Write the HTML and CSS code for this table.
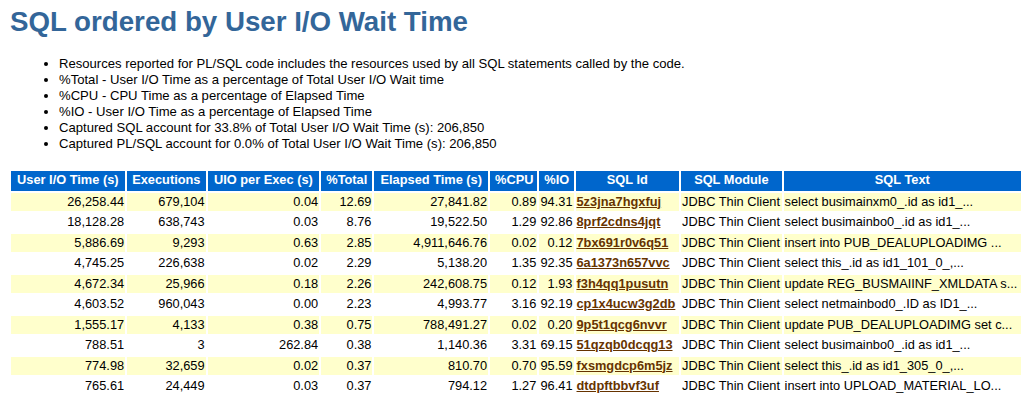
FILE: index.html
```html
<!DOCTYPE html>
<html>
<head>
<meta charset="utf-8">
<title>SQL ordered by User I/O Wait Time</title>
<link rel="stylesheet" href="styles.css">
</head>
<body class="awr">
<div class="page">
<h3 class="awr">SQL ordered by User I/O Wait Time</h3>
<ul class="notes">
<li>Resources reported for PL/SQL code includes the resources used by all SQL statements called by the code.</li>
<li>%Total - User I/O Time as a percentage of Total User I/O Wait time</li>
<li>%CPU - CPU Time as a percentage of Elapsed Time</li>
<li>%IO - User I/O Time as a percentage of Elapsed Time</li>
<li>Captured SQL account for 33.8% of Total User I/O Wait Time (s): 206,850</li>
<li>Captured PL/SQL account for 0.0% of Total User I/O Wait Time (s): 206,850</li>
</ul>
<table class="tdiff">
<thead>
<tr>
<th class="c1">User I/O Time (s)</th>
<th class="c2">Executions</th>
<th class="c3">UIO per Exec (s)</th>
<th class="c4">%Total</th>
<th class="c5">Elapsed Time (s)</th>
<th class="c6">%CPU</th>
<th class="c7">%IO</th>
<th class="c8">SQL Id</th>
<th class="c9">SQL Module</th>
<th class="c10">SQL Text</th>
</tr>
</thead>
<tbody>
<tr class="hl"><td class="num">26,258.44</td><td class="num">679,104</td><td class="num">0.04</td><td class="num">12.69</td><td class="num">27,841.82</td><td class="num">0.89</td><td class="num">94.31</td><td><a class="awr" href="#5z3jna7hgxfuj">5z3jna7hgxfuj</a></td><td>JDBC Thin Client</td><td>select busimainxm0_.id as id1_...</td></tr>
<tr><td class="num">18,128.28</td><td class="num">638,743</td><td class="num">0.03</td><td class="num">8.76</td><td class="num">19,522.50</td><td class="num">1.29</td><td class="num">92.86</td><td><a class="awr" href="#8prf2cdns4jqt">8prf2cdns4jqt</a></td><td>JDBC Thin Client</td><td>select busimainbo0_.id as id1_...</td></tr>
<tr class="hl"><td class="num">5,886.69</td><td class="num">9,293</td><td class="num">0.63</td><td class="num">2.85</td><td class="num">4,911,646.76</td><td class="num">0.02</td><td class="num">0.12</td><td><a class="awr" href="#7bx691r0v6q51">7bx691r0v6q51</a></td><td>JDBC Thin Client</td><td>insert into PUB_DEALUPLOADIMG ...</td></tr>
<tr><td class="num">4,745.25</td><td class="num">226,638</td><td class="num">0.02</td><td class="num">2.29</td><td class="num">5,138.20</td><td class="num">1.35</td><td class="num">92.35</td><td><a class="awr" href="#6a1373n657vvc">6a1373n657vvc</a></td><td>JDBC Thin Client</td><td>select this_.id as id1_101_0_,...</td></tr>
<tr class="hl"><td class="num">4,672.34</td><td class="num">25,966</td><td class="num">0.18</td><td class="num">2.26</td><td class="num">242,608.75</td><td class="num">0.12</td><td class="num">1.93</td><td><a class="awr" href="#f3h4qq1pusutn">f3h4qq1pusutn</a></td><td>JDBC Thin Client</td><td>update REG_BUSMAIINF_XMLDATA s...</td></tr>
<tr><td class="num">4,603.52</td><td class="num">960,043</td><td class="num">0.00</td><td class="num">2.23</td><td class="num">4,993.77</td><td class="num">3.16</td><td class="num">92.19</td><td><a class="awr" href="#cp1x4ucw3g2db">cp1x4ucw3g2db</a></td><td>JDBC Thin Client</td><td>select netmainbod0_.ID as ID1_...</td></tr>
<tr class="hl"><td class="num">1,555.17</td><td class="num">4,133</td><td class="num">0.38</td><td class="num">0.75</td><td class="num">788,491.27</td><td class="num">0.02</td><td class="num">0.20</td><td><a class="awr" href="#9p5t1qcg6nvvr">9p5t1qcg6nvvr</a></td><td>JDBC Thin Client</td><td>update PUB_DEALUPLOADIMG set c...</td></tr>
<tr><td class="num">788.51</td><td class="num">3</td><td class="num">262.84</td><td class="num">0.38</td><td class="num">1,140.36</td><td class="num">3.31</td><td class="num">69.15</td><td><a class="awr" href="#51qzqb0dcqg13">51qzqb0dcqg13</a></td><td>JDBC Thin Client</td><td>select busimainbo0_.id as id1_...</td></tr>
<tr class="hl"><td class="num">774.98</td><td class="num">32,659</td><td class="num">0.02</td><td class="num">0.37</td><td class="num">810.70</td><td class="num">0.70</td><td class="num">95.59</td><td><a class="awr" href="#fxsmgdcp6m5jz">fxsmgdcp6m5jz</a></td><td>JDBC Thin Client</td><td>select this_.id as id1_305_0_,...</td></tr>
<tr><td class="num">765.61</td><td class="num">24,449</td><td class="num">0.03</td><td class="num">0.37</td><td class="num">794.12</td><td class="num">1.27</td><td class="num">96.41</td><td><a class="awr" href="#dtdpftbbvf3uf">dtdpftbbvf3uf</a></td><td>JDBC Thin Client</td><td>insert into UPLOAD_MATERIAL_LO...</td></tr>
</tbody>
</table>
</div>
</body>
</html>
```
FILE: styles.css
```css
body.awr {
  margin: 0;
  background: #ffffff;
  color: #000000;
  font: bold 16.67px "Liberation Sans", Arial, Helvetica, sans-serif;
}

.page {
  padding: 6px 12px 0 8.5px;
}

h3.awr {
  margin: 0;
  padding-left: 1.5px;
  font: bold 27.7px "Liberation Sans", Arial, Helvetica, sans-serif;
  color: #336699;
  background: #ffffff;
}

.notes {
  margin: 18px 0 16.5px;
  padding-left: 50.5px;
}

.notes li {
  font: 13.1px/16px "Liberation Sans", Arial, Helvetica, sans-serif;
  color: #000000;
}

.tdiff {
  table-layout: fixed;
  width: 1014.5px;
  border-collapse: separate;
  border-spacing: 2px;
}

.tdiff th {
  box-sizing: border-box;
  font: bold 12.8px/16px "Liberation Sans", Arial, Helvetica, sans-serif;
  color: #ffffff;
  background: #0066cc;
  padding: 1px 5px 3px;
  text-align: center;
  white-space: nowrap;
  overflow: hidden;
}

.c1 { width: 114px; }
.c2 { width: 78px; }
.c3 { width: 111px; }
.c4 { width: 51px; }
.c5 { width: 113px; }
.c6 { width: 47px; }
.c7 { width: 34px; }
.c8 { width: 103px; }
.c9 { width: 100px; }
.c10 { width: 236px; }

.tdiff td {
  font: 12.8px/16.5px "Liberation Sans", Arial, Helvetica, sans-serif;
  color: #000000;
  background: #ffffff;
  padding: 1px;
  vertical-align: top;
  white-space: nowrap;
  overflow: hidden;
  text-align: left;
}

.tdiff tr.hl td {
  background: #ffffcc;
}

.tdiff td.num {
  text-align: right;
}

a.awr {
  font: bold 12.8px "Liberation Sans", Arial, Helvetica, sans-serif;
  color: #663300;
  text-decoration: underline;
}
```
